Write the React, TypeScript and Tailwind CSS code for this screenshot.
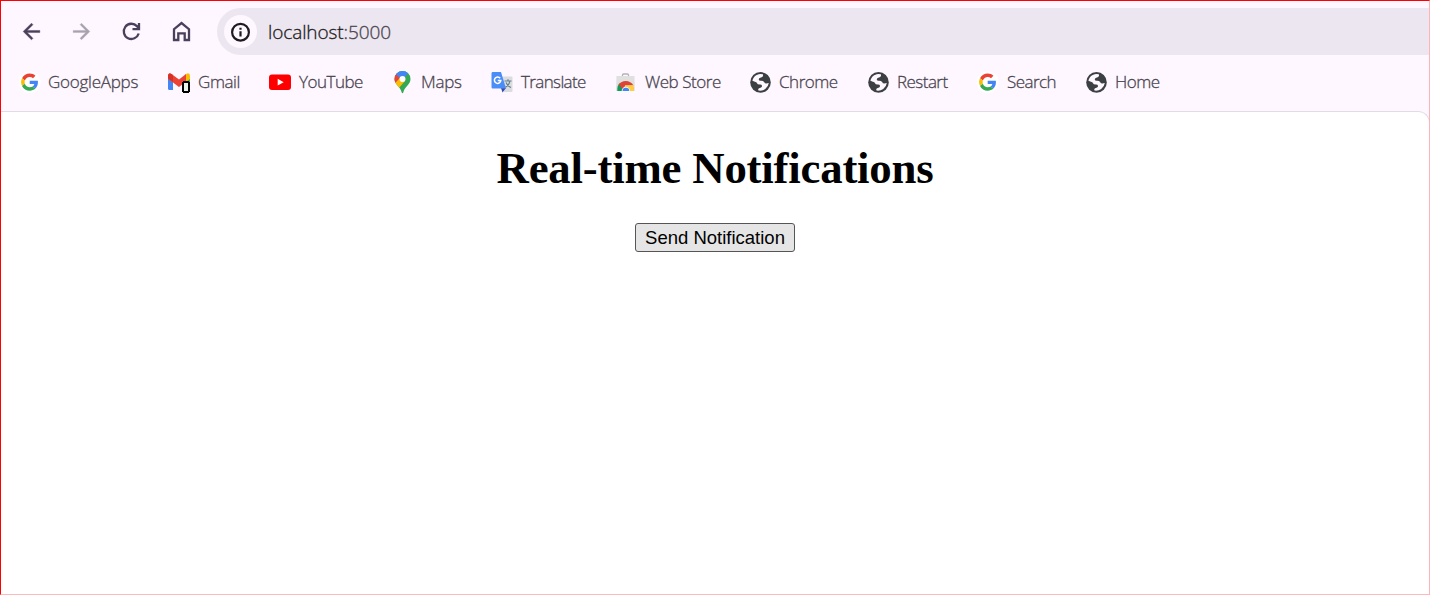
import type { ReactNode } from "react";

function GoogleIcon() {
  return (
    <svg width="22" height="22" viewBox="0 0 22 22" className="shrink-0">
      <circle cx="10.800" cy="11" r="10.800" fill="#fff" />
      <g transform="translate(2.100 2.500) scale(.358)">
        <path fill="#EA4335" d="M24 9.5c3.54 0 6.71 1.22 9.21 3.6l6.85-6.85C35.9 2.38 30.47 0 24 0 14.62 0 6.51 5.38 2.56 13.22l7.98 6.19C12.43 13.72 17.74 9.5 24 9.5z" />
        <path fill="#4285F4" d="M46.98 24.55c0-1.57-.15-3.09-.38-4.55H24v9.02h12.94c-.58 2.96-2.26 5.48-4.78 7.18l7.73 6c4.51-4.18 7.09-10.36 7.09-17.65z" />
        <path fill="#FBBC05" d="M10.53 28.59c-.48-1.45-.76-2.99-.76-4.59s.27-3.14.76-4.59l-7.98-6.19C.92 16.46 0 20.12 0 24c0 3.88.92 7.54 2.56 10.78l7.97-6.19z" />
        <path fill="#34A853" d="M24 48c6.48 0 11.93-2.13 15.89-5.81l-7.73-6c-2.15 1.45-4.92 2.3-8.16 2.3-6.26 0-11.57-4.22-13.47-9.91l-7.98 6.19C6.51 42.62 14.62 48 24 48z" />
      </g>
    </svg>
  );
}

function GmailIcon() {
  return (
    <svg width="23" height="22" viewBox="0 0 23 22" className="shrink-0">
      <path d="M0 6l5 4v9H1.5Q0 19 0 17.5z" fill="#4285f4" />
      <path d="M17 10l5-4v5h-5z" fill="#34a853" />
      <path d="M17 4l2-1.500q3-1 3 2.500v3l-5 4z" fill="#fbbc04" />
      <path d="M0 5q0-4 3.500-2L11 8.500 18 3v7.500L11 16 5 11.500 0 8z" fill="#ea4335" />
      <path d="M0 5q0-3 2.500-2.500L5 4v7L0 7.500z" fill="#d93025" />
      <path d="M15 10h6v1h1v10h-1v1h-6v-1h-1V11h1z" fill="#000" />
      <path d="M16 12h4v8h-4z" fill="#e6f4ea" />
    </svg>
  );
}

function YouTubeIcon() {
  return (
    <svg width="22" height="22" viewBox="0 0 22 22" className="shrink-0">
      <rect y="3.500" width="22" height="15.500" rx="3" fill="#f00" />
      <path d="M8.700 7.800l6 3.400-6 3.400z" fill="#fff" />
    </svg>
  );
}

function MapsIcon() {
  return (
    <svg width="22" height="24" viewBox="0 0 22 24" className="shrink-0">
      <defs>
        <clipPath id="pin">
          <path d="M11.500 1a8 8 0 0 1 8 8c0 6-6.200 7.500-7.200 13.500q-.8 1.500-1.600 0C9.700 16.500 3.500 15 3.500 9a8 8 0 0 1 8-8z" />
        </clipPath>
      </defs>
      <g clipPath="url(#pin)">
        <path d="M0 0h22v24H0z" fill="#34a853" />
        <path d="M2 15L9 7l5 4-7 8z" fill="#fbbc04" />
        <path d="M2 4l3-1 5 4-6 6H1z" fill="#ea4335" />
        <path d="M5 4l3-4h9v3.500l-5 6-5-3z" fill="#4285f4" />
      </g>
      <circle cx="11.500" cy="9" r="3" fill="#fff" />
    </svg>
  );
}

function TranslateIcon() {
  return (
    <svg width="22" height="22" viewBox="0 0 22 22" className="shrink-0">
      <path d="M9 5.500h11.500q1 0 1 1V20q0 1-1 1H13z" fill="#dadce0" />
      <path d="M10 17h5l-3.500 4.500z" fill="#3949ab" />
      <path d="M1.500 1H10l5 16.500H1.500Q.5 17.500.5 16V2.500Q.5 1 1.500 1z" fill="#4b8df8" />
      <path d="M9.200 7.300A3.200 3.200 0 1 0 9.800 9.500H6.800" fill="none" stroke="#fff" strokeWidth="1.500" />
      <path d="M13.500 10h7M17 8.300V10m2 0q-.8 4-4.500 6.300M15 11.500q1.500 3.500 5 5" fill="none" stroke="#607d8b" strokeWidth="1.100" />
    </svg>
  );
}

function StoreIcon() {
  return (
    <svg width="22" height="22" viewBox="0 0 22 22" className="shrink-0">
      <path d="M7.500 5V4q0-1 1-1h4q1 0 1 1v1" fill="none" stroke="#b3b3b3" strokeWidth="1.300" />
      <path d="M1.500 5h18l.3 15H1z" fill="#e0e0e0" />
      <path d="M2.300 20q-.5-5.500 2.700-8l5 8z" fill="#0f9d58" />
      <path d="M3.500 13.500q3-3.500 7-3.500 5.500 0 8 4.500h-8L7.500 18z" fill="#db4437" />
      <path d="M10 14.300h8.400q.9 2.200.6 5.700h-8z" fill="#ffcd40" />
      <path d="M6.700 20a4.200 4.200 0 0 1 8.400 0z" fill="#f1f1f1" />
      <path d="M7.600 20a3.300 3.300 0 0 1 6.600 0z" fill="#4285f4" />
    </svg>
  );
}

function GlobeIcon() {
  return (
    <svg width="22" height="22" viewBox="0 0 22 22" className="shrink-0">
      <circle cx="10.500" cy="11.400" r="10.300" fill="#3c4043" />
      <path d="M2.400 9.800C3.200 6 6.200 3.300 10.200 3l2.700.3q.6 1.500-.7 2.600L9.700 7q-1 .5-.9 1.700.2 1 1.800 1.100 2.500-.2 3.500 1.200.7 1.500 2.200 1.500l2.500-.6q-.5 3.600-3.600 6-3.200 2.300-6.700 1.600-.7-1.100.2-2 .9-.9 2.400-1.100 1.100-.5.9-1.600-.3-1.200-1.900-1.300-2.700.1-3.100-1.300Q6.700 11 4.900 10.800z" fill="#fef7ff" />
    </svg>
  );
}

type Bookmark = { label: string; icon: ReactNode; width: string; text: string };

const bookmarks: Bookmark[] = [
  { label: "GoogleApps", icon: <GoogleIcon />, width: "w-[149px]", text: "-ml-px tracking-[-0.25px]" },
  { label: "Gmail", icon: <GmailIcon />, width: "w-[101px]", text: "tracking-[-0.4px]" },
  { label: "YouTube", icon: <YouTubeIcon />, width: "w-[122px]", text: "tracking-[-0.5px]" },
  { label: "Maps", icon: <MapsIcon />, width: "w-[100px]", text: "tracking-[-0.25px]" },
  { label: "Translate", icon: <TranslateIcon />, width: "w-[124px]", text: "tracking-[-0.62px]" },
  { label: "Web Store", icon: <StoreIcon />, width: "w-[135px]", text: "tracking-[-0.46px]" },
  { label: "Chrome", icon: <GlobeIcon />, width: "w-[118px]", text: "-ml-px tracking-[-0.48px]" },
  { label: "Restart", icon: <GlobeIcon />, width: "w-[109px]", text: "-ml-px tracking-[-0.54px]" },
  { label: "Search", icon: <GoogleIcon />, width: "w-[109px]", text: "tracking-[-0.58px]" },
  { label: "Home", icon: <GlobeIcon />, width: "w-[100px]", text: "-ml-px tracking-[-0.48px]" },
];

function Toolbar() {
  return (
    <div className="flex h-[47px] items-center pl-[18px]">
      <div className="flex w-[198px] items-center gap-[25px] text-[#49405b]">
        <svg width="25" height="25" viewBox="0 0 24 24" fill="currentColor" stroke="currentColor" strokeWidth="0.400">
          <path d="M20 11H7.830l5.590-5.590L12 4l-8 8 8 8 1.410-1.410L7.830 13H20z" />
        </svg>
        <svg width="25" height="25" viewBox="0 0 24 24" fill="#a8a2ae" stroke="#a8a2ae" strokeWidth="0.300">
          <path d="M4 13h12.170l-5.590 5.590L12 20l8-8-8-8-1.410 1.410L16.170 11H4z" />
        </svg>
        <svg width="25" height="25" viewBox="0 0 25 25" fill="none" stroke="currentColor" strokeWidth="2.300">
          <path d="M19.700 14.500A7.600 7.600 0 1 1 17.900 7.100L20 9.800M20 4v6.200H13.500" />
        </svg>
        <svg width="25" height="25" viewBox="0 0 25 25" fill="none" stroke="currentColor" strokeWidth="2.300">
          <path d="M5 21V10.200l7.500-6.200L20 10.200V21h-4.300v-6.700H9.300V21z" />
        </svg>
      </div>
      <div className="flex h-[47px] flex-1 items-center rounded-l-full bg-[#ece6f0] pl-[7px]">
        <div className="flex size-[33px] items-center justify-center rounded-full bg-[#fef7ff]">
          <svg width="20" height="20" viewBox="0 0 20 20" fill="none" stroke="#1d1b20" strokeWidth="2.200">
            <circle cx="9.500" cy="10.200" r="8.400" />
            <path d="M9.500 9.200v5.300M9.500 5.700v2" />
          </svg>
        </div>
        <span className="ml-[11px] whitespace-nowrap pt-px text-[19px] font-light leading-none tracking-[-0.1px] text-[#1d1b20] [-webkit-text-stroke:0.3px]">
          localhost<span className="text-[#49454f]">:5000</span>
        </span>
      </div>
    </div>
  );
}

function BookmarksBar() {
  return (
    <nav className="mt-[15px] flex h-6 items-center pl-[18px]">
      {bookmarks.map(({ label, icon, width, text }) => (
        <a key={label} className={`flex shrink-0 items-center ${width}`}>
          <span className="flex w-[30px] shrink-0 items-center">{icon}</span>
          <span className={`whitespace-nowrap text-[17px] font-light leading-6 text-[#49454f] [-webkit-text-stroke:0.3px] ${text}`}>{label}</span>
        </a>
      ))}
    </nav>
  );
}

export default function App() {
  return (
    <div className="flex h-[595px] w-[1430px] flex-col overflow-hidden border border-t-[#f00] border-r-[#ffb3b9] border-b-[#ffb9bd] border-l-[#f00] bg-[#fef7ff] font-['Open_Sans','Noto_Sans',sans-serif]">
      <header className="h-[110px] shrink-0 pt-[7px]">
        <Toolbar />
        <BookmarksBar />
      </header>
      <main className="-mr-px flex flex-1 flex-col items-center rounded-tr-[12px] border-t border-r border-[#e2dbe7] bg-white pt-[31px]">
        <h1 className="font-['Liberation_Serif',serif] text-[44.800px] font-bold leading-[51px] tracking-[-0.2px] text-black">
          Real-time Notifications
        </h1>
        <button className="mt-[29px] h-[29px] w-40 rounded-[3px] border border-[#555] bg-[#e5e5e5] pt-px font-['Liberation_Sans',sans-serif] text-[18.500px] leading-none whitespace-nowrap text-black">
          Send Notification
        </button>
      </main>
    </div>
  );
}
